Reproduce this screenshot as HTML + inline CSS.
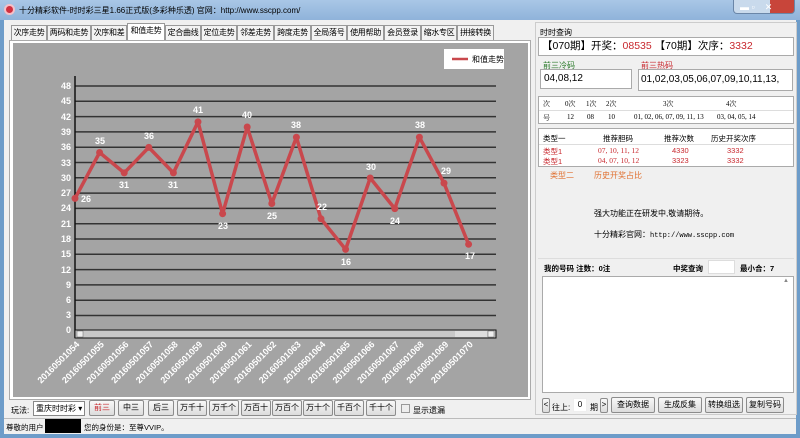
<!DOCTYPE html><html><head><meta charset="utf-8"><style>
*{box-sizing:border-box;margin:0;padding:0}
body{width:800px;height:438px;overflow:hidden;background:#6d9cc9;font-family:"Liberation Sans","Noto Sans CJK SC",sans-serif;font-size:8px;color:#000;position:relative}
.a{position:absolute;white-space:nowrap}
.win{left:4px;top:20px;width:792px;height:414px;background:#f0f0f0}
.tab{position:absolute;top:25px;height:15px;border:1px solid #999;background:#f3f3f3;font-size:8px;line-height:13px;text-align:center;border-bottom:none;white-space:nowrap;overflow:hidden;letter-spacing:-0.3px}
.btn{position:absolute;height:16px;border:1px solid #8c8c8c;border-radius:2px;background:linear-gradient(#f8f8f8,#dcdcdc);font-size:8px;line-height:14px;text-align:center;white-space:nowrap;overflow:hidden}
.box{position:absolute;background:#fff;border:1px solid #aaa;white-space:nowrap}
.red{color:#c8282e}
</style></head><body>
<div class="a" style="left:0;top:0;width:800px;height:20px;background:linear-gradient(#a9c7e6,#8fb3da)"></div>
<div class="a" style="left:4px;top:4px;width:11px;height:11px;border-radius:50%;background:#d03040;border:2px solid #f5c0c8"></div>
<div class="a" style="left:19px;top:5px;font-size:8px">十分精彩软件-时时彩三星1.66正式版(多彩种乐透) 官网：http://www.sscpp.com/</div>
<div class="a" style="left:733px;top:0;width:62px;height:14px;border:1px solid #6a86a8;border-top:none;border-radius:0 0 4px 4px;background:linear-gradient(90deg,#c9daec 0,#c9daec 60%,#c8453a 60%)"></div>
<div class="a" style="left:740px;top:2px;color:#fff;font-size:9px">▬ ▫ &nbsp;&nbsp; ✕</div>
<div class="a win"></div>
<div class="tab" style="left:11px;width:36px">次序走势</div>
<div class="tab" style="left:47px;width:44px">两码和走势</div>
<div class="tab" style="left:91px;width:36px">次序和差</div>
<div class="tab" style="left:127px;width:38px;top:23px;height:18px;background:#fff">和值走势</div>
<div class="tab" style="left:165px;width:36px">定合曲线</div>
<div class="tab" style="left:201px;width:36px">定位走势</div>
<div class="tab" style="left:237px;width:37px">邻差走势</div>
<div class="tab" style="left:274px;width:37px">跨度走势</div>
<div class="tab" style="left:311px;width:36px">全局落号</div>
<div class="tab" style="left:347px;width:37px">使用帮助</div>
<div class="tab" style="left:384px;width:37px">会员登录</div>
<div class="tab" style="left:421px;width:36px">缩水专区</div>
<div class="tab" style="left:457px;width:37px">拼接转换</div>
<div class="a" style="left:9px;top:40px;width:522px;height:360px;background:#fff;border:1px solid #aaa"></div>
<svg class="a" style="left:13px;top:43px" width="515" height="354" viewBox="13 43 515 354">
<rect x="13" y="43" width="515" height="354" fill="#a4a4a4"/>
<rect x="444" y="49" width="60" height="20" fill="#fff"/>
<line x1="452" y1="59" x2="468" y2="59" stroke="#c9484d" stroke-width="2.5"/>
<text x="472" y="62" font-size="8" fill="#000">和值走势</text>
<g stroke="#333" stroke-width="1.5">
<line x1="75" x2="496" y1="86" y2="86"/><line x1="75" x2="496" y1="101.3" y2="101.3"/><line x1="75" x2="496" y1="116.6" y2="116.6"/><line x1="75" x2="496" y1="131.9" y2="131.9"/><line x1="75" x2="496" y1="147.2" y2="147.2"/><line x1="75" x2="496" y1="162.5" y2="162.5"/><line x1="75" x2="496" y1="177.8" y2="177.8"/><line x1="75" x2="496" y1="193.1" y2="193.1"/><line x1="75" x2="496" y1="208.4" y2="208.4"/><line x1="75" x2="496" y1="223.7" y2="223.7"/><line x1="75" x2="496" y1="239" y2="239"/><line x1="75" x2="496" y1="254.3" y2="254.3"/><line x1="75" x2="496" y1="269.6" y2="269.6"/><line x1="75" x2="496" y1="284.9" y2="284.9"/><line x1="75" x2="496" y1="300.2" y2="300.2"/><line x1="75" x2="496" y1="315.5" y2="315.5"/>
</g>
<line x1="75" y1="76" x2="75" y2="338" stroke="#111" stroke-width="1.5"/>
<rect x="75" y="330" width="421" height="8" fill="#c8c8c8" stroke="#111"/>
<rect x="77" y="331" width="6" height="6" fill="#eee" stroke="#666" stroke-width=".5"/>
<rect x="488" y="331" width="6" height="6" fill="#eee" stroke="#666" stroke-width=".5"/>
<rect x="455" y="331" width="32" height="6" fill="#ddd"/>
<g font-size="9" font-weight="bold" fill="#fff" text-anchor="end">
<text x="71" y="89">48</text><text x="71" y="104">45</text><text x="71" y="120">42</text><text x="71" y="135">39</text><text x="71" y="150">36</text><text x="71" y="166">33</text><text x="71" y="181">30</text><text x="71" y="196">27</text><text x="71" y="211">24</text><text x="71" y="227">21</text><text x="71" y="242">18</text><text x="71" y="257">15</text><text x="71" y="273">12</text><text x="71" y="288">9</text><text x="71" y="303">6</text><text x="71" y="318">3</text><text x="71" y="333">0</text>
</g>
<polyline fill="none" stroke="#c9484d" stroke-width="3.5" stroke-linejoin="round" points="75,198.4 99.6,152.5 124.2,172.9 148.8,147.4 173.4,172.9 198,121.9 222.6,213.7 247.2,127 271.8,203.5 296.4,137.2 321,218.8 345.6,249.4 370.2,178 394.8,208.6 419.4,137.2 444,183.1 468.6,244.3"/>
<g fill="#c9484d"><circle cx="75" cy="198.4" r="3.5"/><circle cx="99.6" cy="152.5" r="3.5"/><circle cx="124.2" cy="172.9" r="3.5"/><circle cx="148.8" cy="147.4" r="3.5"/><circle cx="173.4" cy="172.9" r="3.5"/><circle cx="198" cy="121.9" r="3.5"/><circle cx="222.6" cy="213.7" r="3.5"/><circle cx="247.2" cy="127" r="3.5"/><circle cx="271.8" cy="203.5" r="3.5"/><circle cx="296.4" cy="137.2" r="3.5"/><circle cx="321" cy="218.8" r="3.5"/><circle cx="345.6" cy="249.4" r="3.5"/><circle cx="370.2" cy="178" r="3.5"/><circle cx="394.8" cy="208.6" r="3.5"/><circle cx="419.4" cy="137.2" r="3.5"/><circle cx="444" cy="183.1" r="3.5"/><circle cx="468.6" cy="244.3" r="3.5"/></g>
<g font-size="9" font-weight="bold" fill="#fff" text-anchor="middle">
<text x="86" y="202">26</text><text x="100" y="144">35</text><text x="124" y="188">31</text><text x="149" y="139">36</text><text x="173" y="188">31</text><text x="198" y="113">41</text><text x="223" y="229">23</text><text x="247" y="118">40</text><text x="272" y="219">25</text><text x="296" y="128">38</text><text x="322" y="210">22</text><text x="346" y="265">16</text><text x="371" y="170">30</text><text x="395" y="224">24</text><text x="420" y="128">38</text><text x="446" y="174">29</text><text x="470" y="259">17</text>
</g>
<g font-size="9" font-weight="bold" fill="#fff" text-anchor="end">
<text transform="translate(80,345) rotate(-45)">20160501054</text><text transform="translate(104.6,345) rotate(-45)">20160501055</text><text transform="translate(129.2,345) rotate(-45)">20160501056</text><text transform="translate(153.8,345) rotate(-45)">20160501057</text><text transform="translate(178.4,345) rotate(-45)">20160501058</text><text transform="translate(203,345) rotate(-45)">20160501059</text><text transform="translate(227.6,345) rotate(-45)">20160501060</text><text transform="translate(252.2,345) rotate(-45)">20160501061</text><text transform="translate(276.8,345) rotate(-45)">20160501062</text><text transform="translate(301.4,345) rotate(-45)">20160501063</text><text transform="translate(326,345) rotate(-45)">20160501064</text><text transform="translate(350.6,345) rotate(-45)">20160501065</text><text transform="translate(375.2,345) rotate(-45)">20160501066</text><text transform="translate(399.8,345) rotate(-45)">20160501067</text><text transform="translate(424.4,345) rotate(-45)">20160501068</text><text transform="translate(449,345) rotate(-45)">20160501069</text><text transform="translate(473.6,345) rotate(-45)">20160501070</text>
</g>
</svg>
<div class="a" style="left:11px;top:405px">玩法:</div>
<div class="a" style="left:33px;top:401px;width:52px;height:15px;background:#fff;border:1px solid #888;font-size:8px;line-height:13px;padding-left:2px">重庆时时彩 ▾</div>
<div class="btn red" style="left:89px;top:400px;width:26px">前三</div>
<div class="btn" style="left:118px;top:400px;width:26px">中三</div>
<div class="btn" style="left:148px;top:400px;width:26px">后三</div>
<div class="btn" style="left:177px;top:400px;width:30px">万千十</div>
<div class="btn" style="left:209px;top:400px;width:30px">万千个</div>
<div class="btn" style="left:241px;top:400px;width:30px">万百十</div>
<div class="btn" style="left:272px;top:400px;width:30px">万百个</div>
<div class="btn" style="left:303px;top:400px;width:30px">万十个</div>
<div class="btn" style="left:334px;top:400px;width:30px">千百个</div>
<div class="btn" style="left:366px;top:400px;width:30px">千十个</div>
<div class="a" style="left:401px;top:404px;width:9px;height:9px;border:1px solid #999;background:#eee"></div>
<div class="a" style="left:413px;top:405px">显示遗漏</div>
<div class="a" style="left:4px;top:418px;width:792px;height:16px;border-top:1px solid #bbb;background:#f0f0f0"></div>
<div class="a" style="left:6px;top:422px;font-size:7.5px">尊敬的用户</div>
<div class="a" style="left:45px;top:419px;width:36px;height:14px;background:#000"></div>
<div class="a" style="left:84px;top:422px;font-size:7.5px">您的身份是：至尊VVIP。</div>
<div class="a" style="left:535px;top:22px;width:262px;height:393px;border:1px solid #ccc"></div>
<div class="a" style="left:540px;top:27px">时时查询</div>
<div class="box" style="left:538px;top:37px;width:256px;height:19px;font-size:10.5px;line-height:17px;padding-left:3px">【070期】开奖：<span class="red">08535</span> 【70期】次序：<span class="red">3332</span></div>
<div class="a" style="left:543px;top:60px;color:#2a7a2a">前三冷码</div>
<div class="a" style="left:641px;top:60px;color:#c8282e">前三热码</div>
<div class="box" style="left:540px;top:69px;width:92px;height:20px;font-size:10px;line-height:18px;padding-left:3px">04,08,12</div>
<div class="box" style="left:638px;top:69px;width:155px;height:22px;font-size:10px;line-height:20px;padding-left:2px;overflow:hidden">01,02,03,05,06,07,09,10,11,13,</div>
<div class="box" style="left:538px;top:96px;width:256px;height:28px;font-family:'Liberation Serif','Noto Serif CJK SC',serif;font-size:7px">
<div class="a" style="top:2px;left:4px">次</div><div class="a" style="top:2px;left:26px">0次</div><div class="a" style="top:2px;left:47px">1次</div><div class="a" style="top:2px;left:67px">2次</div><div class="a" style="top:2px;left:124px">3次</div><div class="a" style="top:2px;left:187px">4次</div>
<div class="a" style="top:16px;left:4px">号</div><div class="a" style="top:16px;left:28px">12</div><div class="a" style="top:16px;left:48px">08</div><div class="a" style="top:16px;left:69px">10</div><div class="a" style="top:16px;left:95px">01, 02, 06, 07, 09, 11, 13</div><div class="a" style="top:16px;left:178px">03, 04, 05, 14</div>
<div class="a" style="top:13px;left:0;width:254px;border-top:1px solid #ddd"></div>
</div>
<div class="box" style="left:538px;top:128px;width:256px;height:39px;font-size:7.5px">
<div class="a" style="top:4px;left:4px">类型一</div><div class="a" style="top:4px;left:64px">推荐胆码</div><div class="a" style="top:4px;left:125px">推荐次数</div><div class="a" style="top:4px;left:172px">历史开奖次序</div>
<div class="a red" style="top:17px;left:4px">类型1</div><div class="a red" style="top:17px;left:59px;font-family:'Liberation Serif',serif">07, 10, 11, 12</div><div class="a red" style="top:17px;left:133px">4330</div><div class="a red" style="top:17px;left:188px">3332</div>
<div class="a red" style="top:27px;left:4px">类型1</div><div class="a red" style="top:27px;left:59px;font-family:'Liberation Serif',serif">04, 07, 10, 12</div><div class="a red" style="top:27px;left:133px">3323</div><div class="a red" style="top:27px;left:188px">3332</div>
<div class="a" style="top:15px;left:0;width:254px;border-top:1px solid #ddd"></div>
</div>
<div class="a" style="left:550px;top:170px;color:#e07030">类型二</div>
<div class="a" style="left:594px;top:170px;color:#e07030">历史开奖占比</div>
<div class="a" style="left:594px;top:208px">强大功能正在研发中,敬请期待。</div>
<div class="a" style="left:594px;top:229px">十分精彩官网：<span style="font-family:'Liberation Mono',monospace;font-size:7px">http://www.sscpp.com</span></div>
<div class="a" style="left:538px;top:258px;width:256px;border-top:1px solid #ddd"></div>
<div class="a" style="left:544px;top:263px;font-weight:bold;font-size:7.5px">我的号码 注数：0注</div>
<div class="a" style="left:673px;top:263px;font-weight:bold;font-size:7.5px">中奖查询</div>
<div class="box" style="left:708px;top:260px;width:27px;height:14px;border-color:#ddd"></div>
<div class="a" style="left:740px;top:263px;font-weight:bold;font-size:7.5px">最小合：7</div>
<div class="box" style="left:542px;top:276px;width:252px;height:117px"></div>
<div class="a" style="left:783px;top:278px;font-size:6px;color:#888">▲</div>
<div class="btn" style="left:542px;top:398px;width:8px;height:15px;font-size:8px;line-height:12px">&lt;</div>
<div class="a" style="left:552px;top:402px">往上:</div>
<div class="box" style="left:573px;top:398px;width:14px;height:14px;border-color:#eee;font-size:8px;text-align:center;line-height:12px">0</div>
<div class="a" style="left:590px;top:402px">期</div>
<div class="btn" style="left:600px;top:398px;width:8px;height:15px;font-size:8px;line-height:12px">&gt;</div>
<div class="btn" style="left:611px;top:397px;width:44px">查询数据</div>
<div class="btn" style="left:658px;top:397px;width:44px">生成反集</div>
<div class="btn" style="left:705px;top:397px;width:38px">转换组选</div>
<div class="btn" style="left:746px;top:397px;width:38px">复制号码</div>
</body></html>
